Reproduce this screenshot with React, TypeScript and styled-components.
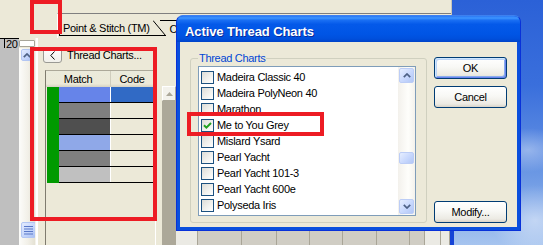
import styled, { createGlobalStyle } from 'styled-components';

const GlobalStyle = createGlobalStyle`
  html, body {
    margin: 0;
    padding: 0;
  }
  body {
    font-family: "Liberation Sans", Arial, sans-serif;
    font-size: 11px;
    letter-spacing: -0.3px;
    color: #000;
  }
  * {
    box-sizing: border-box;
  }
`;

const Screen = styled.div`
  position: relative;
  width: 543px;
  height: 245px;
  overflow: hidden;
  display: flex;
  background:
    radial-gradient(ellipse 40px 22px at 528px 150px, rgba(255, 255, 255, 0.35), transparent),
    radial-gradient(ellipse 45px 35px at 535px 220px, rgba(255, 255, 255, 0.45), transparent),
    linear-gradient(180deg, #2b61d7 0%, #3a6fdc 35%, #6d99e4 72%, #a6c4ef 100%);
`;

/* ---------- background application ---------- */

const AppWindow = styled.div`
  width: 454px;
  display: flex;
  flex-direction: column;
`;

const TopRow = styled.div`
  width: 452px;
  height: 38px;
  padding: 13px 0 0 57px;
  display: flex;
  background: #ece9d8;
  border-right: 1px solid #c9c6b8;
`;

const TabBar = styled.div`
  flex: 1;
  display: flex;
  align-items: flex-start;
  border-top: 1px solid #7f7f7f;
  border-left: 1px solid #fff;
  padding-left: 1px;
`;

const Tab = styled.div`
  height: 22px;
  padding: 8px 3px 0 3px;
  line-height: 13px;
  border-left: 1px solid #000;
  border-bottom: 1px solid #000;
  white-space: nowrap;
`;

const TabSlant = styled.svg`
  flex: none;
  display: block;
`;

const BackTab = styled.div`
  width: 19px;
  overflow: hidden;
  margin: 6px 0 0 -6px;
  padding: 2px 0 0 10px;
  border-top: 1px solid #000;
  line-height: 13px;
  white-space: nowrap;
`;

const Body = styled.div`
  flex: 1;
  display: flex;
  min-height: 0;
`;

const LeftRail = styled.div`
  width: 35px;
  display: flex;
  flex-direction: column;
  background: #ece9d8;
`;

const RulerRow = styled.div`
  height: 10px;
  display: flex;
`;

const RulerScale = styled.div`
  width: 19px;
  padding-left: 6px;
  font-size: 11px;
  line-height: 10px;
  border-top: 1px solid #000;
  background: linear-gradient(90deg, #c0c0c0 4px, #000 4px, #000 5px, #c0c0c0 5px);
`;

const RulerKnob = styled.div`
  width: 16px;
  height: 7px;
  margin-top: 2px;
  background: #fff;
  border: 1px solid #a7a59a;
  border-radius: 1px;
`;

const Rail = styled.div`
  flex: 1;
  display: flex;
`;

const Gutter = styled.div`
  width: 19px;
  background: #bfbfbf;
`;

const ScrollStrip = styled.div`
  width: 16px;
  display: flex;
  flex-direction: column;
  justify-content: space-between;
  padding: 1px 0 7px 1px;
  background: linear-gradient(90deg, #fcfcfa 0%, #f2f0e8 55%, #e4e1d3 100%);
`;

const StripButton = styled.div<{ $w: number; $h: number }>`
  width: ${(p) => p.$w}px;
  height: ${(p) => p.$h}px;
  margin-left: 1px;
  display: flex;
  align-items: center;
  justify-content: center;
  border: 1px solid #b3c6f3;
  border-radius: 2px;
  background: linear-gradient(135deg, #e3ebfe 0%, #c3d4fb 60%, #a9c0f3 100%);
`;

const Divider = styled.div`
  width: 8px;
  background: linear-gradient(90deg, #f4f3ec 0 1px, #ffffff 1px 3px, #ece9d8 3px);
`;

const Panel = styled.div`
  width: 119px;
  display: flex;
  flex-direction: column;
  background: #ece9d8;
`;

const PanelHead = styled.div`
  height: 16px;
  margin-top: 9px;
  display: flex;
  align-items: center;
  white-space: nowrap;
`;

const BackButton = styled.div`
  width: 19px;
  height: 16px;
  display: flex;
  align-items: center;
  justify-content: center;
  border: 1px solid #9a9a94;
  border-radius: 3px;
  background: linear-gradient(180deg, #ffffff, #f1f0ea);
`;

const HeadTitle = styled.span`
  margin-left: 5px;
  line-height: 13px;
`;

const ListFrame = styled.div`
  width: 111px;
  flex: 1;
  margin: 7px 0 0 2px;
  display: flex;
  flex-direction: column;
  border-left: 1px solid #7f7b6e;
  border-top: 1px solid #aca899;
  border-right: 1px solid #fff;
`;

const TableHeader = styled.div`
  height: 16px;
  display: flex;
  background: linear-gradient(180deg, #ebeadb 0%, #ece9d8 80%, #d6d2c2 100%);
`;

const HeaderCell = styled.div<{ $w: number }>`
  width: ${(p) => p.$w}px;
  line-height: 16px;
  text-align: center;
  border-right: 1px solid #d0cdbd;
`;

const Row = styled.div`
  height: 16px;
  display: flex;
`;

const GreenCell = styled.div`
  width: 12px;
  margin-left: 1px;
  background: #009a00;
`;

const RowBody = styled.div`
  flex: 1;
  display: flex;
  border-bottom: 1px solid #000;
`;

const MatchCell = styled.div<{ $color: string }>`
  width: 52px;
  background: ${(p) => p.$color};
  border-right: 1px solid #fff;
`;

const CodeCell = styled.div<{ $color: string }>`
  flex: 1;
  background: ${(p) => p.$color};
`;

const ScrollCol = styled.div`
  width: 14px;
  padding-top: 48px;
  display: flex;
  flex-direction: column;
  background: #ece9d8;
`;

const GreyArrow = styled.div`
  height: 15px;
  display: flex;
  align-items: center;
  justify-content: center;
  background: #f3f2ec;
  border: 1px solid;
  border-color: #fff #aca899 #aca899 #fff;
`;

const GreyTrack = styled.div`
  flex: 1;
  background: #aca899;
`;

const Content = styled.div`
  flex: 1;
  display: flex;
  flex-direction: column;
  justify-content: flex-end;
  background: #ece9d8;
  border-right: 4px solid #1643d6;
`;

const GridStrip = styled.div`
  height: 14px;
  display: flex;
  background: #d0cdc4;
`;

const GridCell = styled.div<{ $w?: number; $light?: boolean }>`
  width: ${(p) => (p.$w ? `${p.$w}px` : 'auto')};
  flex: ${(p) => (p.$w ? 'none' : 1)};
  background: ${(p) => (p.$light ? '#ebeae4' : 'transparent')};
  border-right: 1px solid #a9a597;
`;

/* ---------- dialog ---------- */

const Dialog = styled.div`
  position: absolute;
  left: 176px;
  top: 15px;
  width: 345px;
  height: 216px;
  display: flex;
  flex-direction: column;
  padding: 0 3px 3px;
  background: #0a4fdd;
  border: 1px solid #0831d9;
  border-top-color: #3d80f0;
  border-radius: 7px 7px 0 0;
`;

const TitleBar = styled.div`
  height: 27px;
  margin: 0 -3px;
  padding: 9px 0 0 8px;
  border-radius: 6px 6px 0 0;
  background: linear-gradient(
    180deg,
    #2a78f4 0%,
    #3d95ff 8%,
    #1a6ff3 16%,
    #0459e9 32%,
    #0055e5 70%,
    #004fdc 88%,
    #0043c8 100%
  );
  color: #fff;
  font-size: 13px;
  font-weight: bold;
  letter-spacing: -0.1px;
  line-height: 13px;
  text-shadow: 1px 1px 0 #0a2a9a;
  white-space: nowrap;
`;

const Client = styled.div`
  flex: 1;
  display: flex;
  padding: 9px 10px 4px 10px;
  background: #ece9d8;
`;

const GroupBox = styled.fieldset`
  width: 237px;
  min-width: 0;
  margin: 0;
  padding: 0 10px 6px 7px;
  border: 1px solid #d0d0bf;
  border-radius: 3px;
`;

const GroupLegend = styled.legend`
  padding: 0 1px;
  color: #0046d5;
  line-height: 14px;
`;

const ListBox = styled.div`
  width: 218px;
  height: 150px;
  margin-top: 1px;
  display: flex;
  border: 1px solid #7f9db9;
  background: #fff;
`;

const Items = styled.div`
  flex: 1;
  padding-top: 2px;
`;

const ListRow = styled.div`
  height: 16px;
  display: flex;
  align-items: center;
  gap: 3px;
  padding-left: 2px;
  white-space: nowrap;
`;

const CheckBox = styled.div`
  width: 13px;
  height: 13px;
  flex: none;
  display: flex;
  align-items: center;
  justify-content: center;
  border: 1px solid #1c5180;
  background: linear-gradient(135deg, #dcdcd7 0%, #f1f1ee 55%, #ffffff 100%);
`;

const ScrollBar = styled.div`
  width: 17px;
  padding: 1px;
  display: flex;
  flex-direction: column;
  background: linear-gradient(90deg, #f3f1ec 0%, #fefefb 60%, #f4f2ec 100%);
`;

const ScrollButton = styled.div<{ $h: number; $gap?: number; $bottom?: boolean }>`
  height: ${(p) => p.$h}px;
  margin-top: ${(p) => (p.$bottom ? 'auto' : `${p.$gap ?? 0}px`)};
  display: flex;
  align-items: center;
  justify-content: center;
  border: 1px solid #bccdf6;
  border-radius: 2px;
  background: linear-gradient(135deg, #e6eeff 0%, #c8d8fd 55%, #b2c7f6 100%);
`;

const ButtonCol = styled.div`
  width: 73px;
  margin-left: 7px;
  padding-top: 6px;
  display: flex;
  flex-direction: column;
  gap: 7px;
`;

const Button = styled.div<{ $default?: boolean; $bottom?: boolean }>`
  height: 22px;
  margin-top: ${(p) => (p.$bottom ? 'auto' : 0)};
  display: flex;
  align-items: center;
  justify-content: center;
  border: 1px solid #003c74;
  border-radius: 3px;
  background: linear-gradient(180deg, #ffffff 0%, #f8f8f5 45%, #eceae3 85%, #d8d3c8 100%);
  box-shadow: ${(p) =>
    p.$default
      ? 'inset 1px 1px 0 #cee7ff, inset -1px -1px 0 #6982ee, inset 2px 2px 0 #bcd4f6, inset -2px -2px 0 #89adec'
      : 'none'};
`;

/* ---------- annotations ---------- */

const Marker = styled.div<{ $x: number; $y: number; $w: number; $h: number }>`
  position: absolute;
  left: ${(p) => p.$x}px;
  top: ${(p) => p.$y}px;
  width: ${(p) => p.$w}px;
  height: ${(p) => p.$h}px;
  border: 4px solid #ed1c24;
  pointer-events: none;
`;

const Chevron = ({ dir, color = '#4d6185' }: { dir: 'up' | 'down'; color?: string }) => (
  <svg width="8" height="5" viewBox="0 0 8 5">
    <path
      d={dir === 'up' ? 'M0.8 4.2 L4 1 L7.2 4.2' : 'M0.8 0.8 L4 4 L7.2 0.8'}
      fill="none"
      stroke={color}
      strokeWidth="1.7"
    />
  </svg>
);

const rows = [
  { match: '#6684e9', code: '#316ac5' },
  { match: '#7f7f7f', code: '#ece9d8' },
  { match: '#4f4f4f', code: '#ece9d8' },
  { match: '#8fa8e8', code: '#ece9d8' },
  { match: '#7f7f7f', code: '#ece9d8' },
  { match: '#c0c0c0', code: '#ece9d8' },
];

const charts = [
  { name: 'Madeira Classic 40' },
  { name: 'Madeira PolyNeon 40' },
  { name: 'Marathon' },
  { name: 'Me to You Grey', checked: true },
  { name: 'Mislard Ysard' },
  { name: 'Pearl Yacht' },
  { name: 'Pearl Yacht 101-3' },
  { name: 'Pearl Yacht 600e' },
  { name: 'Polyseda Iris' },
];

const gridCells = [22, 44, 35, 33, 33, 34, 33, 15, 16];

export default function App() {
  return (
    <>
      <GlobalStyle />
      <Screen>
        <AppWindow>
          <TopRow>
            <TabBar>
              <Tab>Point &amp; Stitch (TM)</Tab>
              <TabSlant width="13" height="22" viewBox="0 0 13 22">
                <path d="M0 6.5 L12.5 21.5 M0 21.5 H13" stroke="#000" strokeWidth="1" fill="none" />
              </TabSlant>
              <BackTab>Options</BackTab>
            </TabBar>
          </TopRow>
          <Body>
            <LeftRail>
              <RulerRow>
                <RulerScale>20</RulerScale>
                <RulerKnob />
              </RulerRow>
              <Rail>
                <Gutter />
                <ScrollStrip>
                  <StripButton $w={12} $h={12}>
                    <Chevron dir="up" />
                  </StripButton>
                  <StripButton $w={15} $h={16}>
                    <svg width="9" height="10" viewBox="0 0 9 10">
                      <path d="M0 1.5 H9 M0 4 H9 M0 6.5 H9 M0 9 H9" stroke="#5a78c8" strokeWidth="1.2" />
                    </svg>
                  </StripButton>
                </ScrollStrip>
              </Rail>
            </LeftRail>
            <Divider />
            <Panel>
              <PanelHead>
                <BackButton>
                  <svg width="5" height="9" viewBox="0 0 5 9">
                    <path d="M4.5 0.5 L0.8 4.5 L4.5 8.5" fill="none" stroke="#000" strokeWidth="1" />
                  </svg>
                </BackButton>
                <HeadTitle>Thread Charts...</HeadTitle>
              </PanelHead>
              <ListFrame>
                <TableHeader>
                  <HeaderCell $w={65}>Match</HeaderCell>
                  <HeaderCell $w={43}>Code</HeaderCell>
                </TableHeader>
                {rows.map((r, i) => (
                  <Row key={i}>
                    <GreenCell />
                    <RowBody>
                      <MatchCell $color={r.match} />
                      <CodeCell $color={r.code} />
                    </RowBody>
                  </Row>
                ))}
              </ListFrame>
            </Panel>
            <ScrollCol>
              <GreyArrow>
                <svg width="7" height="4" viewBox="0 0 7 4">
                  <path d="M0 4 L3.5 0 L7 4 Z" fill="#aca899" />
                </svg>
              </GreyArrow>
              <GreyTrack />
            </ScrollCol>
            <Content>
              <GridStrip>
                {gridCells.map((w, i) => (
                  <GridCell key={i} $w={w} $light={i === 0 || i === 8} />
                ))}
                <GridCell $light />
              </GridStrip>
            </Content>
          </Body>
        </AppWindow>

        <Dialog>
          <TitleBar>Active Thread Charts</TitleBar>
          <Client>
            <GroupBox>
              <GroupLegend>Thread Charts</GroupLegend>
              <ListBox>
                <Items>
                  {charts.map((c) => (
                    <ListRow key={c.name}>
                      <CheckBox>
                        {c.checked && (
                          <svg width="9" height="9" viewBox="0 0 9 9">
                            <path d="M1 4.2 L3.4 6.6 L8 2" fill="none" stroke="#21a121" strokeWidth="2" />
                          </svg>
                        )}
                      </CheckBox>
                      <span>{c.name}</span>
                    </ListRow>
                  ))}
                </Items>
                <ScrollBar>
                  <ScrollButton $h={15}>
                    <Chevron dir="up" />
                  </ScrollButton>
                  <ScrollButton $h={12} $gap={69} />
                  <ScrollButton $h={15} $bottom>
                    <Chevron dir="down" />
                  </ScrollButton>
                </ScrollBar>
              </ListBox>
            </GroupBox>
            <ButtonCol>
              <Button $default>OK</Button>
              <Button>Cancel</Button>
              <Button $bottom>Modify...</Button>
            </ButtonCol>
          </Client>
        </Dialog>

        <Marker $x={30} $y={0} $w={32} $h={34} />
        <Marker $x={30} $y={47} $w={127} $h={174} />
        <Marker $x={187} $y={112} $w={137} $h={24} />
      </Screen>
    </>
  );
}
